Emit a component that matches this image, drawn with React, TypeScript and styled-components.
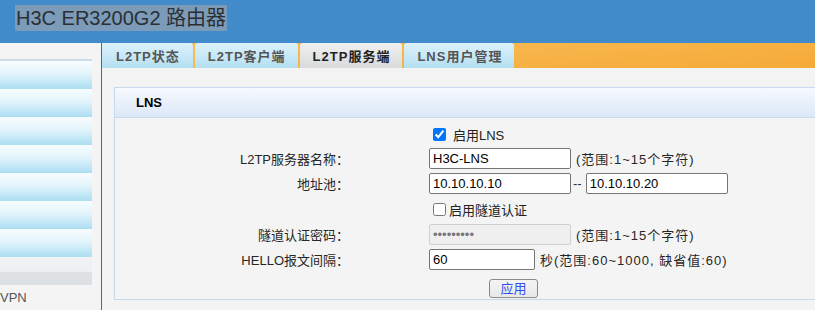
import { createGlobalStyle } from "styled-components";
import styled from "styled-components";

const GlobalStyle = createGlobalStyle`
  html, body {
    margin: 0;
    padding: 0;
    overflow: hidden;
  }
  body {
    width: 815px;
    height: 310px;
    background: #f3f3f3;
    font-family: "Liberation Sans", Arial, "Noto Sans CJK SC", sans-serif;
    font-size: 13px;
    color: #333;
  }
`;

const TABS = ["L2TP状态", "L2TP客户端", "L2TP服务端", "LNS用户管理"];
const ACTIVE_TAB = 2;
const MENU_COUNT = 7;

export default function App() {
  return (
    <Page>
      <GlobalStyle />
      <Header>
        <Title>H3C ER3200G2 路由器</Title>
      </Header>
      <Main>
        <Sidebar>
          <MenuList>
            {Array.from({ length: MENU_COUNT }).map((_, i) => (
              <MenuItem key={i} />
            ))}
            <MenuFooter />
          </MenuList>
          <SideLabel>VPN</SideLabel>
        </Sidebar>
        <Content>
          <TabBar>
            {TABS.map((t, i) => (
              <Tab key={t} active={i === ACTIVE_TAB}>
                {t}
              </Tab>
            ))}
          </TabBar>
          <Panel>
            <PanelHead>LNS</PanelHead>
            <PanelBody>
              <Form>
                <span />
                <Field>
                  <Check type="checkbox" checked readOnly />
                  <CheckText spaced>启用LNS</CheckText>
                </Field>

                <Label>L2TP服务器名称：</Label>
                <Field>
                  <TextInput defaultValue="H3C-LNS" />
                  <Hint>(范围:1~15个字符)</Hint>
                </Field>

                <Label>地址池：</Label>
                <Field>
                  <TextInput defaultValue="10.10.10.10" />
                  <Dash>--</Dash>
                  <TextInput defaultValue="10.10.10.20" />
                </Field>

                <span />
                <Field>
                  <Check type="checkbox" readOnly />
                  <CheckText>启用隧道认证</CheckText>
                </Field>

                <Label>隧道认证密码：</Label>
                <Field>
                  <TextInput type="password" defaultValue="123456789" disabled />
                  <Hint>(范围:1~15个字符)</Hint>
                </Field>

                <Label>HELLO报文间隔：</Label>
                <Field>
                  <TextInput small defaultValue="60" />
                  <Hint>秒(范围:60~1000, 缺省值:60)</Hint>
                </Field>

                <span />
                <Field>
                  <ApplyButton>应用</ApplyButton>
                </Field>
              </Form>
            </PanelBody>
          </Panel>
        </Content>
      </Main>
    </Page>
  );
}

const Page = styled.div`
  display: flex;
  flex-direction: column;
  width: 815px;
  height: 310px;
`;

const Header = styled.div`
  height: 43px;
  flex-shrink: 0;
  box-sizing: border-box;
  padding: 5px 0 0 15px;
  background: #418bcb;
`;

const Title = styled.span`
  display: inline-block;
  height: 26px;
  line-height: 26px;
  padding: 0 1px;
  background: #7b9bb9;
  color: #2b2f33;
  font-size: 20px;
`;

const Main = styled.div`
  display: flex;
  flex: 1;
  min-height: 0;
`;

const Sidebar = styled.div`
  width: 101px;
  flex-shrink: 0;
  background: #f4f4f4;
  border-right: 1px solid #2a70cf;
  padding-top: 16px;
`;

const MenuList = styled.div`
  width: 92px;
  border-top: 2px solid #cddcea;
`;

const MenuItem = styled.div`
  height: 28px;
  background: linear-gradient(#f8fdff 0%, #e2f4fc 45%, #acdef2 100%);
`;

const MenuFooter = styled.div`
  height: 28px;
  background: linear-gradient(#f1f3f5 0%, #eceef1 52%, #dfe2e5 53%, #dde0e3 100%);
`;

const SideLabel = styled.div`
  margin-top: 5px;
  line-height: 16px;
  color: #555;
`;

const Content = styled.div`
  flex: 1;
  min-width: 0;
  background: #f3f3f3;
`;

const TabBar = styled.div`
  display: flex;
  height: 25px;
  background: linear-gradient(175deg, #f8bc57 0%, #f7b54a 50%, #f5aa38 100%);
`;

const Tab = styled.div<{ active?: boolean }>`
  display: flex;
  align-items: center;
  padding: 0 12px 0 13px;
  margin-right: 2px;
  border-radius: 3px 3px 0 0;
  font-weight: bold;
  font-size: 13px;
  letter-spacing: 1px;
  white-space: nowrap;
  color: ${(p) => (p.active ? "#222" : "#555")};
  background: ${(p) =>
    p.active
      ? "linear-gradient(#f0f0f0, #e2e3e4 60%, #d9dadb)"
      : "linear-gradient(#dcf1fa, #c7e8f6 55%, #b2dff1)"};

  &:first-child {
    border-top-left-radius: 0;
    padding: 0 13px 0 14px;
  }
`;

const Panel = styled.div`
  width: 760px;
  margin: 19px 0 0 12px;
`;

const PanelHead = styled.div`
  height: 29px;
  line-height: 29px;
  padding-left: 21px;
  border: 1px solid #c6d9ee;
  background: linear-gradient(#f6f9fe, #e9f0fb 50%, #dce8f8);
  font-weight: bold;
  color: #000;
`;

const PanelBody = styled.div`
  border: 1px solid #c6d9ee;
  border-top: none;
  background: #f4f4f4;
  padding: 4px 0 1px;
`;

const Form = styled.div`
  display: grid;
  grid-template-columns: 234px 1fr;
  grid-template-rows: 24px 25px 25px 26px 25px 25px auto;
  column-gap: 80px;
  align-items: center;
`;

const Label = styled.div`
  text-align: right;
  white-space: nowrap;
  color: #262626;
`;

const Field = styled.div`
  display: flex;
  align-items: center;
  white-space: nowrap;
`;

const Check = styled.input`
  width: 13px;
  height: 13px;
  margin: 3px 3px 3px 4px;
`;

const CheckText = styled.span<{ spaced?: boolean }>`
  margin-left: ${(p) => (p.spaced ? "4px" : "0")};
  color: #222;
`;

const TextInput = styled.input<{ small?: boolean }>`
  box-sizing: border-box;
  width: ${(p) => (p.small ? "106px" : "142px")};
  height: 21px;
  margin: 0;
  padding: 0 3px;
  border: 1px solid #767676;
  border-radius: 2px;
  background: #fff;
  font-family: "Liberation Sans", Arial, sans-serif;
  font-size: 13px;
  color: #000;
  outline: none;

  &:disabled {
    background: #efefef;
    border-color: #cfcfcf;
    color: #777;
  }
`;

const Hint = styled.span`
  margin-left: 5px;
  letter-spacing: 1px;
  color: #262626;
`;

const Dash = styled.span`
  margin: 0 4px 0 2px;
  color: #333;
`;

const ApplyButton = styled.button`
  width: 49px;
  height: 19px;
  margin: 7px 0 0 60px;
  padding: 0;
  border: 1px solid #8a8a8a;
  border-radius: 3px;
  background: linear-gradient(#f4f4f4, #e8e8e8);
  font-family: "Liberation Sans", Arial, "Noto Sans CJK SC", sans-serif;
  font-size: 13px;
  line-height: 17px;
  color: #3050f0;
`;
